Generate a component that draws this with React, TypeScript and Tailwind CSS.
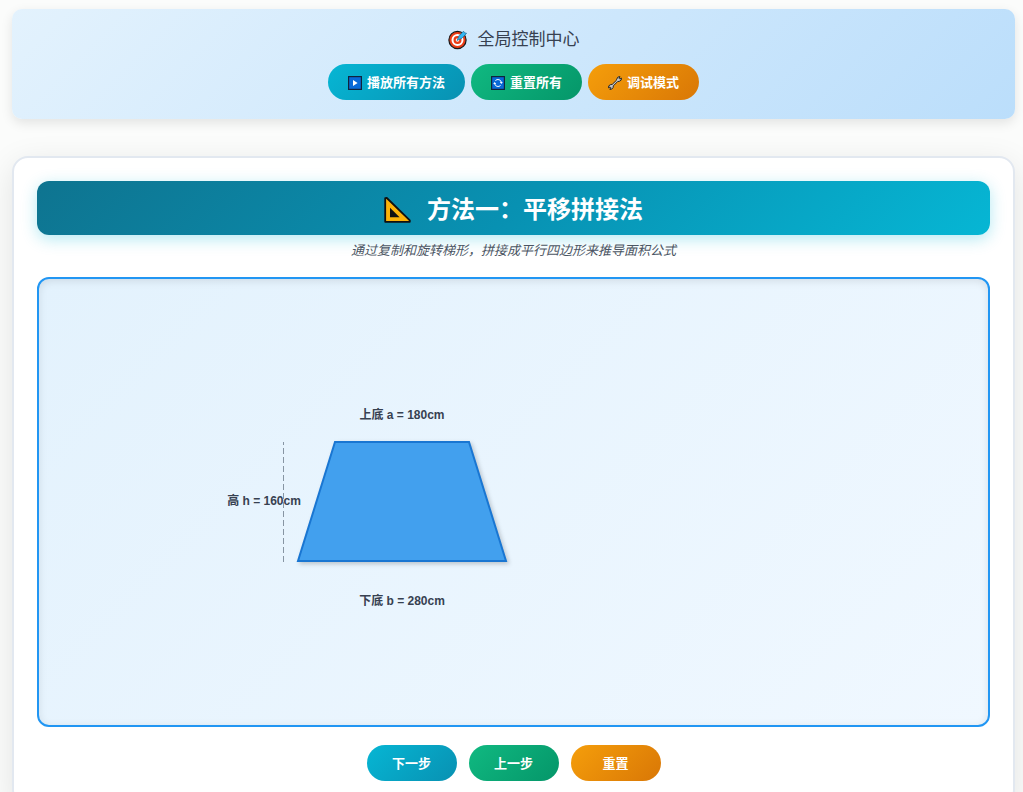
import type { ReactNode } from "react";

const tones = {
  cyan: "from-[#06b6d4] to-[#0891b2]",
  green: "from-[#10b981] to-[#059669]",
  amber: "from-[#f59e0b] to-[#d97706]",
};

function PillButton({ tone, icon, children }: { tone: keyof typeof tones; icon?: ReactNode; children: ReactNode }) {
  return (
    <button
      type="button"
      className={`inline-flex h-9 min-w-[90px] items-center justify-center gap-[5px] rounded-full bg-linear-135 px-5 pt-px text-[13px] font-bold text-white ${tones[tone]}`}
    >
      {icon}
      {children}
    </button>
  );
}

function TargetIcon() {
  return (
    <svg className="h-5 w-5" viewBox="0 0 20 20" aria-hidden="true">
      <circle cx="9.5" cy="10" r="8.6" fill="#ea3c16" stroke="#1a1a1a" strokeWidth="1.2" />
      <circle cx="9.5" cy="10" r="5" fill="#ea3c16" stroke="#fff" strokeWidth="2" />
      <circle cx="9.5" cy="10" r="1.8" fill="#fff" />
      <path d="M9 10.5 11 5.8 15.5 1.2 16.6 2.8 18.6 3.3 14 8.2Z" fill="#35b6f2" stroke="#1d6b94" strokeWidth=".7" />
    </svg>
  );
}

function PlayIcon() {
  return (
    <svg className="h-3.5 w-3.5" viewBox="0 0 14 14" aria-hidden="true">
      <rect x=".6" y=".6" width="12.8" height="12.8" fill="#0869d8" stroke="#10233c" strokeWidth="1.2" />
      <path d="M5 4v6l4.6-3Z" fill="#fff" />
    </svg>
  );
}

function RefreshIcon() {
  return (
    <svg className="h-3.5 w-3.5" viewBox="0 0 14 14" aria-hidden="true">
      <rect x=".6" y=".6" width="12.8" height="12.8" fill="#0869d8" stroke="#10233c" strokeWidth="1.2" />
      <path d="M4.4 4.6A3.5 3.5 0 0 1 10.4 6.4M9.6 9.4A3.5 3.5 0 0 1 3.6 7.6" fill="none" stroke="#fff" strokeWidth="1" />
      <path d="M8.8 6h3l-1.5 2ZM5.2 8h-3l1.5-2Z" fill="#fff" />
    </svg>
  );
}

function WrenchIcon() {
  return (
    <svg className="h-3.5 w-3.5" viewBox="0 0 14 14" aria-hidden="true">
      <path
        d="M8.6 3.4 9.9 1.1 12 .6 11.2 2.4l.6.6 1.7-.9-.4 2.1L11.2 5.4l-1.5.1-4.4 4.4-.1 1.5-1.3 1.6-2 .5.8-1.9-.6-.6-1.7.8.5-2.1 1.9-1.2 1.4-.1 4.3-4.2Z"
        fill="#c3c6c8"
        stroke="#262626"
        strokeWidth="1"
        strokeLinejoin="round"
      />
    </svg>
  );
}

function TriangleRulerIcon() {
  return (
    <svg className="h-[26px] w-[27px]" viewBox="0 0 27 26" aria-hidden="true">
      <path
        d="M1.2 1.2 2.8 1 25.8 23.4v1.4H1.2Z"
        fill="#fbb30a"
        stroke="#111"
        strokeWidth="1.8"
        strokeLinejoin="round"
      />
      <path d="M6 10.8v9.4h9.6Z" fill="#111" />
    </svg>
  );
}

function TrapezoidDiagram() {
  return (
    <svg
      className="h-[210px] w-[300px] shrink-0 fill-[#374151] text-[12px] font-bold"
      viewBox="0 0 300 210"
      role="img"
      aria-label="梯形"
    >
      <polygon
        points="115,45 249,45 286,164 78,164"
        className="fill-[#42a0ee] stroke-[#1976d2] stroke-2 drop-shadow-[2px_2px_2px_rgba(0,0,0,0.2)]"
      />
      <text x="182" y="22" textAnchor="middle">上底 a = 180cm</text>
      <text x="182" y="208" textAnchor="middle">下底 b = 280cm</text>
      <text x="44" y="108" textAnchor="middle">高 h = 160cm</text>
      <line x1="63.5" y1="45" x2="63.5" y2="165" stroke="#8795a3" strokeDasharray="6 3" strokeDashoffset="3" />
    </svg>
  );
}

export default function App() {
  return (
    <div className="min-h-screen bg-[#fbfcfb] pt-[9px] pr-2 pl-3 font-['Liberation_Sans','Noto_Sans_CJK_SC',sans-serif]">
      {/* Global controls */}
      <header className="flex flex-col items-center gap-3 rounded-[10px] bg-linear-135 from-[#e3f2fd] to-[#bbdefb] py-[19px] shadow-[0_4px_12px_rgba(0,0,0,0.1)]">
        <h1 className="flex items-center gap-2.5 text-[17px] leading-6 text-[#374151]">
          <TargetIcon />
          全局控制中心
        </h1>
        <div className="flex flex-wrap justify-center gap-1.5">
          <PillButton tone="cyan" icon={<PlayIcon />}>播放所有方法</PillButton>
          <PillButton tone="green" icon={<RefreshIcon />}>重置所有</PillButton>
          <PillButton tone="amber" icon={<WrenchIcon />}>调试模式</PillButton>
        </div>
      </header>

      {/* Method card */}
      <main className="mt-[37px] rounded-2xl border-2 border-[#e2e8f0] bg-white p-[23px] shadow-[0_8px_32px_rgba(0,0,0,0.1)]">
        <h2 className="flex h-[54px] items-center justify-center gap-4 rounded-xl bg-linear-135 from-[#0e7490] via-[#0891b2] to-[#06b6d4] pt-1 text-[24px] font-bold text-white shadow-[0_4px_16px_rgba(6,182,212,0.3)]">
          <TriangleRulerIcon />
          方法一：平移拼接法
        </h2>
        <p className="mt-1.5 text-center text-[13px] leading-5 text-[#4b5563] italic">
          通过复制和旋转梯形，拼接成平行四边形来推导面积公式
        </p>
        <div className="mt-4 flex h-[450px] items-center overflow-hidden rounded-xl border-2 border-[#2196f3] bg-linear-135 from-[#e3f2fd] to-[#f0f8ff] pl-[181px] shadow-[inset_0_2px_8px_rgba(0,0,0,0.1)]">
          <TrapezoidDiagram />
        </div>
        <div className="mt-[18px] flex flex-wrap justify-center gap-3">
          <PillButton tone="cyan">下一步</PillButton>
          <PillButton tone="green">上一步</PillButton>
          <PillButton tone="amber">重置</PillButton>
        </div>
      </main>
    </div>
  );
}
